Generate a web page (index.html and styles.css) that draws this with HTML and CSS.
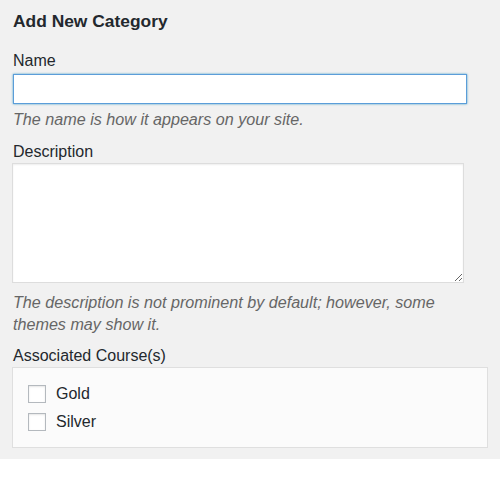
FILE: index.html
```html
<!DOCTYPE html>
<html lang="en">
<head>
<meta charset="utf-8">
<title>Add New Category</title>
<link rel="stylesheet" href="styles.css">
</head>
<body>
<div class="panel">
  <h2 class="title">Add New Category</h2>
  <div class="field">
    <label class="label" for="tag-name">Name</label>
    <input class="text-input" id="tag-name" type="text">
    <p class="help">The name is how it appears on your site.</p>
  </div>
  <div class="field field-desc">
    <label class="label" for="tag-desc">Description</label>
    <textarea class="textarea" id="tag-desc"></textarea>
    <p class="help help-multi">The description is not prominent by default; however, some themes may show it.</p>
  </div>
  <div class="field field-courses">
    <div class="label">Associated Course(s)</div>
    <div class="course-box">
      <label class="course-row"><span class="checkbox"></span><span>Gold</span></label>
      <label class="course-row"><span class="checkbox"></span><span>Silver</span></label>
    </div>
  </div>
</div>
</body>
</html>
```

FILE: styles.css
```css
html, body {
  margin: 0;
  padding: 0;
  background: #ffffff;
}

body {
  font-family: "Liberation Sans", Arial, Helvetica, sans-serif;
  color: #23282d;
}

.panel {
  background: #f1f1f1;
  padding: 10px 12px 12px 12px;
  height: 437px;
}

.title {
  margin: 0;
  font-size: 17.4px;
  line-height: 22px;
  font-weight: bold;
  color: #23282d;
  padding-left: 1px;
}

.field {
  margin-top: 19px;
}

.field-desc {
  margin-top: 13px;
}

.field-courses {
  margin-top: 11px;
}

.label {
  display: block;
  font-size: 16px;
  line-height: 20px;
  padding-left: 1px;
  margin-bottom: 3px;
}

.field-desc .label,
.field-courses .label {
  margin-bottom: 1px;
}

.text-input {
  display: block;
  box-sizing: border-box;
  width: 454px;
  height: 30px;
  margin: 0 0 0 1px;
  border: 1px solid #5b9dd9;
  border-radius: 0;
  box-shadow: 0 0 2px rgba(30, 140, 190, 0.8);
  background: #fff;
  outline: none;
}

.help {
  margin: 5px 0 0 0;
  font-size: 16.15px;
  line-height: 20px;
  font-style: italic;
  color: #666666;
  padding-left: 1px;
}

.help-multi {
  margin-top: 8px;
  line-height: 22px;
  width: 450px;
}

.textarea {
  display: block;
  box-sizing: border-box;
  width: 452px;
  height: 120px;
  margin: 0;
  border: 1px solid #dddddd;
  box-shadow: inset 0 1px 2px rgba(0, 0, 0, 0.07);
  background: #fff;
  resize: both;
  outline: none;
}

.course-box {
  box-sizing: border-box;
  width: 476px;
  border: 1px solid #dfdfdf;
  background: #fbfbfb;
  padding: 12px 15px 11px 15px;
}

.course-row {
  display: flex;
  align-items: center;
  height: 28px;
  font-size: 16px;
  color: #23282d;
}

.checkbox {
  box-sizing: border-box;
  width: 18px;
  height: 18px;
  border: 1px solid #b4b9be;
  background: #fff;
  box-shadow: inset 0 1px 2px rgba(0, 0, 0, 0.1);
  margin-right: 10px;
  flex: none;
}
```
